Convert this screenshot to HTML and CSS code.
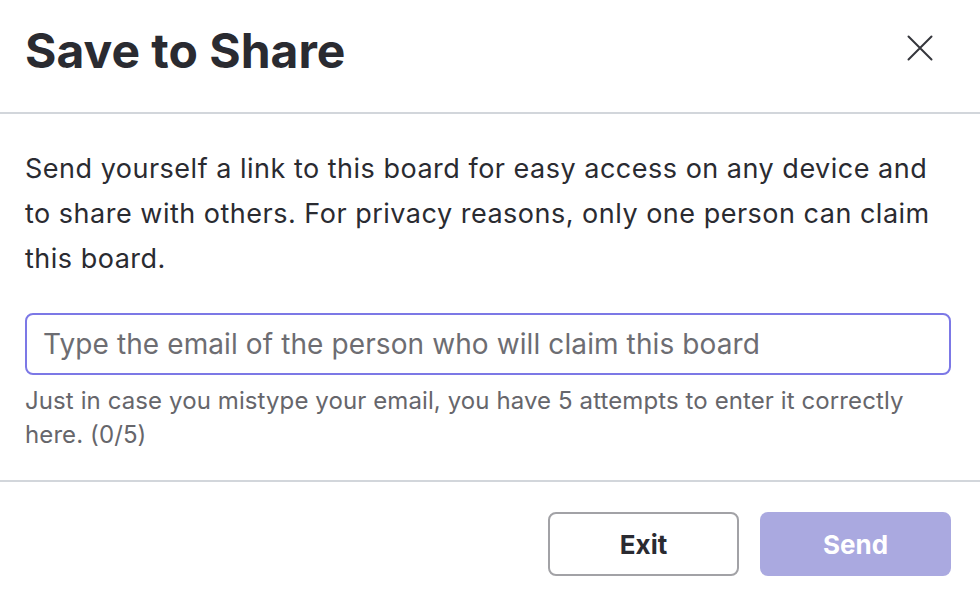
FILE: index.html
```html
<!DOCTYPE html>
<html lang="en">
<head>
<meta charset="utf-8">
<title>Save to Share</title>
<link rel="stylesheet" href="styles.css">
</head>
<body>
<div class="modal">
  <header class="modal-header">
    <h1 class="title">Save to Share</h1>
    <button class="close" aria-label="Close">
      <svg width="26" height="26" viewBox="0 0 26 26"><path d="M1.5 1.5L24.5 24.5M24.5 1.5L1.5 24.5" stroke="#35363c" stroke-width="2" stroke-linecap="round" fill="none"/></svg>
    </button>
  </header>
  <section class="modal-body">
    <p class="intro">Send yourself a link to this board for easy access on any device and to share with others. For privacy reasons, only one person can claim this board.</p>
    <input class="email" type="email" placeholder="Type the email of the person who will claim this board">
    <p class="hint">Just in case you mistype your email, you have 5 attempts to enter it correctly here. (0/5)</p>
  </section>
  <footer class="modal-footer">
    <button class="btn btn-exit">Exit</button>
    <button class="btn btn-send">Send</button>
  </footer>
</div>
</body>
</html>
```

FILE: styles.css
```css
* { box-sizing: border-box; }
html, body { margin: 0; padding: 0; background: #fff; }
body { font-family: Inter, "Liberation Sans", sans-serif; color: #2a2b31; }
.modal { width: 980px; height: 594px; display: flex; flex-direction: column; }
.modal-header {
  height: 114px;
  display: flex; align-items: flex-start; justify-content: space-between;
  padding: 22px 47px 0 25px;
  border-bottom: 2px solid #d2d6db;
}
.title { margin: 0; font-size: 48px; line-height: 58px; font-weight: 700; color: #2a2b31; }
.close { background: none; border: 0; padding: 0; width: 26px; height: 26px; cursor: pointer; margin-top: 13px; }
.modal-body { padding: 32px 29px 0 25px; height: 368px; border-bottom: 2px solid #d2d6db; }
.intro { margin: 0; font-size: 27px; line-height: 45px; letter-spacing: 0.5px; color: #2a2b31; }
.email {
  display: block; width: 100%; height: 62px; margin-top: 32px;
  border: 2px solid #7c78e6; border-radius: 8px;
  padding: 0 16px; font-family: inherit; font-size: 28px; letter-spacing: 0.1px; color: #2a2b31; outline: none;
}
.email::placeholder { color: #6d6d72; }
.hint { margin: 9px 0 0; font-size: 24px; line-height: 34px; letter-spacing: 0.1px; color: #66666b; }
.modal-footer { flex: 1; display: flex; justify-content: flex-end; gap: 21px; padding: 30px 29px 0 0; }
.btn { width: 191px; height: 64px; border-radius: 8px; font-family: Inter, "Liberation Sans", sans-serif; font-size: 26px; font-weight: 700; cursor: pointer; }
.btn-exit { background: #fff; border: 2px solid #a2a2a6; color: #2a2b31; }
.btn-send { background: #aaa9e0; border: 0; color: #fff; }
```
